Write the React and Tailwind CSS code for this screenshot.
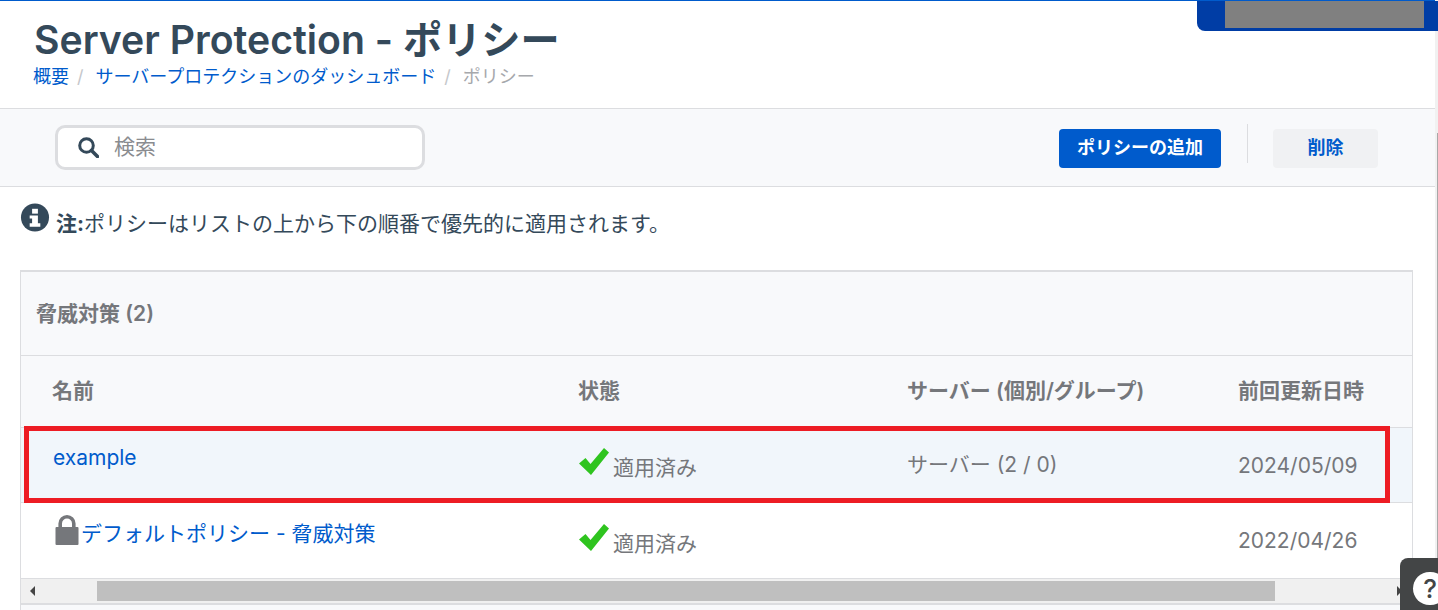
function CheckMark() {
  return (
    <svg width="32" height="30" viewBox="0 0 32 30" className="shrink-0">
      <path d="M1 16.5 L7.5 11 L12.5 17 L26 1 L31 5.5 L13 28 Z" fill="#2fc41f" />
    </svg>
  );
}

function Lock() {
  return (
    <svg width="24" height="30" viewBox="0 0 24 30" className="shrink-0">
      <path d="M5.2 14 V8.6 a6.8 6.8 0 0 1 13.6 0 V14" fill="none" stroke="#75777b" strokeWidth="3.6" />
      <rect x="0.5" y="12" width="23" height="18" rx="1" fill="#75777b" />
    </svg>
  );
}

function InfoIcon() {
  return (
    <svg width="30" height="29" viewBox="0 0 30 30" className="shrink-0">
      <circle cx="15" cy="15" r="14.5" fill="#34495a" />
      <rect x="12" y="6" width="6" height="5" fill="#fff" />
      <path d="M9.5 13 H18 V21 H20.5 V24.5 H9.5 V21 H12 V16 H9.5 Z" fill="#fff" />
    </svg>
  );
}

function SearchIcon() {
  return (
    <svg width="21" height="21" viewBox="0 0 21 21" className="shrink-0">
      <circle cx="8.5" cy="8.5" r="6.8" fill="none" stroke="#34495a" strokeWidth="3" />
      <path d="M13.5 13.5 L19.5 19.5" stroke="#34495a" strokeWidth="3.6" strokeLinecap="round" />
    </svg>
  );
}

function Row({ name, lock, servers, date, active }) {
  return (
    <div className={`grid grid-cols-[526px_329px_331px_1fr] pl-[31px] border-b border-[#dcdde0] ${active ? "h-[75px] bg-[#f1f6fb]" : "h-[76px] bg-white"}`}>
      <div className="flex items-start">
        {lock && <span className="mt-[12px] ml-[3px]"><Lock /></span>}
        <a className={`text-[21px] leading-[30px] text-[#005bcc] ${lock ? "mt-[16px] ml-[2px]" : "mt-[15px] ml-px"}`}>{name}</a>
      </div>
      <div className={`flex items-start ${lock ? "pt-[20px]" : "pt-[19px]"}`}>
        <CheckMark />
        <span className="text-[21px] leading-[30px] text-[#75777b] mt-[6px] ml-[3px]">適用済み</span>
      </div>
      <div className="text-[21px] leading-[30px] text-[#75777b] pt-[22px]">{servers}</div>
      <div className="text-[21px] leading-[30px] text-[#75777b] pt-[23px]">{date}</div>
    </div>
  );
}

export default function App() {
  return (
    <div className="relative flex h-[610px] w-[1438px] overflow-hidden bg-white font-['Inter','Noto_Sans_CJK_JP',sans-serif]">
      <div className="w-[1435px] shrink-0">
        {/* Header */}
        <div className="border-t border-[#005bcc] h-[108px] pl-[34px] pt-[17px] relative">
          <h1 className="text-[39.2px] leading-[44px] font-semibold text-[#34495a]">Server Protection - ポリシー</h1>
          <div className="flex items-center text-[18px] leading-[24px] mt-[3px] -ml-px">
            <a className="text-[#005bcc]">概要</a>
            <span className="text-[#c5c7cb] ml-[8px] mr-[12px]">/</span>
            <a className="text-[#005bcc]">サーバープロテクションのダッシュボード</a>
            <span className="text-[#c5c7cb] ml-[8px] mr-[12px]">/</span>
            <span className="text-[#a6a8ac]">ポリシー</span>
          </div>
          <div className="absolute top-0 right-[-3px] w-[241px] h-[30px] bg-[#003da5] rounded-bl-[8px] pl-[28px] pr-[14px]">
            <div className="h-[27px] bg-[#808080]" />
          </div>
        </div>

        {/* Toolbar */}
        <div className="flex items-start h-[79px] bg-[#f8f9fb] border-y border-[#dcdde0] pl-[55px]">
          <div className="flex items-center w-[370px] h-[45px] mt-[16px] bg-white border-[3px] border-[#dcdde0] rounded-[10px] pl-[20px]">
            <SearchIcon />
            <span className="ml-[15px] text-[21px] text-[#8a8c90] -mt-px">検索</span>
          </div>
          <button className="ml-[634px] mt-[20px] w-[162px] h-[39px] pb-[3px] bg-[#005bcc] rounded-[4px] text-white text-[18px] font-bold">ポリシーの追加</button>
          <div className="ml-[26px] mt-[15px] w-px h-[39px] bg-[#dcdde0]" />
          <button className="ml-[25px] mt-[20px] w-[105px] h-[39px] pb-[3px] bg-[#f0f1f3] rounded-[4px] text-[#005bcc] text-[18px] font-bold">削除</button>
        </div>

        {/* Note */}
        <div className="flex items-start pl-[20px] pt-[16px] h-[83px]">
          <InfoIcon />
          <p className="ml-[6px] mt-[7px] text-[21px] leading-[28px] text-[#34495a]"><b>注:</b>ポリシーはリストの上から下の順番で優先的に適用されます。</p>
        </div>

        {/* Card */}
        <div className="relative ml-[20px] w-[1393px] border-x border-[#dcdde0] border-t-2 bg-[#f8f9fb]">
          <div className="h-[84px] flex items-center pl-[15px] border-b border-[#dcdde0] text-[21px] font-semibold text-[#75777b]">脅威対策 (2)</div>
          <div className="grid grid-cols-[526px_329px_331px_1fr] pl-[31px] h-[72px] pb-[2px] items-center border-b border-[#dcdde0] text-[21px] font-semibold text-[#75777b]">
            <div>名前</div>
            <div>状態</div>
            <div>サーバー (個別/グループ)</div>
            <div>前回更新日時</div>
          </div>
          <Row name="example" servers="サーバー (2 / 0)" date="2024/05/09" active />
          <Row name="デフォルトポリシー - 脅威対策" servers="" date="2022/04/26" lock />

          {/* table scrollbar */}
          <div className="flex items-center h-[26px] bg-[#f0f0f0] border-b-2 border-[#dcdde0] pt-[2px] pb-[2px]">
            <span className="ml-[9px] w-0 h-0 border-y-[5px] border-y-transparent border-r-[5px] border-r-[#444]" />
            <div className="ml-[62px] w-[1178px] h-full bg-[#bfbfbf]" />
            <span className="ml-auto mr-[10px] w-0 h-0 border-y-[5px] border-y-transparent border-l-[5px] border-l-[#444]" />
          </div>
          <div className="h-[20px]" />

          <div className="absolute left-[3px] top-[154px] w-[1366px] h-[77px] border-[5px] border-[#ed1c24]" />
        </div>
      </div>

      {/* Page scrollbar sliver */}
      <div className="w-[3px] bg-[#f1f1f1] flex flex-col">
        <div className="h-[133px]" />
        <div className="flex-1 ml-[2px] bg-[#a8a8a8]" />
      </div>

      {/* Help widget */}
      <div className="absolute left-[1400px] top-[558px] w-[38px] h-[52px] bg-[#434546] rounded-tl-[8px] pl-[13px] pt-[14px]">
        <div className="flex items-center justify-center w-[34px] h-[33px] rounded-full bg-white text-[#434546] text-[26px] font-medium">?</div>
      </div>
    </div>
  );
}
